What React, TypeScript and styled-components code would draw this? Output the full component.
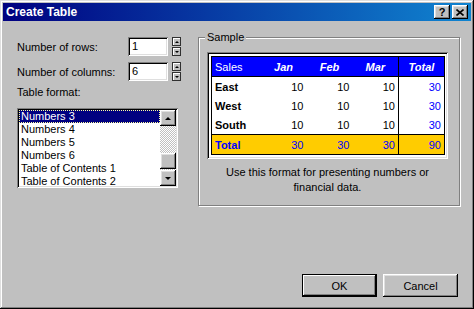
import styled, { createGlobalStyle } from "styled-components";

const GlobalStyle = createGlobalStyle`
  html, body {
    margin: 0;
    padding: 0;
    background: #c0c0c0;
  }
  body {
    font-family: "Liberation Sans", Arial, sans-serif;
    font-size: 11px;
    color: #000;
  }
`;

const raised = `
  box-shadow: inset -1px -1px #000, inset 1px 1px #fff, inset -2px -2px #808080, inset 2px 2px #dfdfdf;
`;

const sunken = `
  box-shadow: inset 1px 1px #808080, inset -1px -1px #fff, inset 2px 2px #000, inset -2px -2px #dfdfdf;
`;

const Window = styled.div`
  box-sizing: border-box;
  width: 474px;
  height: 309px;
  padding: 3px;
  background: #c0c0c0;
  box-shadow: inset -1px -1px #000, inset 1px 1px #dfdfdf, inset -2px -2px #808080,
    inset 2px 2px #fff;
  display: flex;
  flex-direction: column;
`;

const TitleBar = styled.div`
  height: 18px;
  display: flex;
  align-items: center;
  padding: 0 3px 0 3px;
  background: linear-gradient(to right, #000080, #1084d0);
  color: #fff;
  font-weight: bold;
  font-size: 12px;
`;

const TitleText = styled.span`
  flex: 1;
`;

const CaptionButton = styled.div<{ $gap?: number }>`
  width: 16px;
  height: 14px;
  margin-left: ${(p) => p.$gap ?? 0}px;
  background: #c0c0c0;
  ${raised}
  display: flex;
  align-items: center;
  justify-content: center;
  color: #000;
  font-size: 11px;
  font-weight: bold;
  line-height: 14px;
`;

const Body = styled.div`
  flex: 1;
  display: flex;
  flex-direction: column;
  padding: 16px 13px 9px 14px;
`;

const Main = styled.div`
  display: flex;
  align-items: flex-start;
  gap: 17px;
`;

const LeftColumn = styled.div`
  width: 164px;
  display: flex;
  flex-direction: column;
`;

const FieldRow = styled.div<{ $top?: number }>`
  display: flex;
  align-items: center;
  height: 19px;
  margin-top: ${(p) => p.$top ?? 0}px;
`;

const FieldLabel = styled.span`
  width: 111px;
`;

const NumberBox = styled.div`
  box-sizing: border-box;
  width: 40px;
  height: 19px;
  padding-left: 4px;
  line-height: 19px;
  background: #fff;
  ${sunken}
`;

const Spinner = styled.div`
  display: flex;
  flex-direction: column;
  margin-left: 4px;
  gap: 1px;
`;

const SpinButton = styled.div`
  width: 9px;
  height: 9px;
  background: #c0c0c0;
  box-shadow: inset 0 0 0 1px #303030, inset 2px 2px #fff;
  display: flex;
  align-items: center;
  justify-content: center;
`;

const Arrow = styled.span<{ $down?: boolean; $size?: number }>`
  width: 0;
  height: 0;
  border-left: ${(p) => p.$size ?? 3}px solid transparent;
  border-right: ${(p) => p.$size ?? 3}px solid transparent;
  ${(p) =>
    p.$down
      ? `border-top: ${p.$size ?? 3}px solid #000;`
      : `border-bottom: ${p.$size ?? 3}px solid #000;`}
`;

const SectionLabel = styled.div`
  margin-top: 5px;
  line-height: 13px;
`;

const ListBox = styled.div`
  box-sizing: border-box;
  margin-top: 9px;
  width: 161px;
  height: 80px;
  padding: 2px;
  background: #fff;
  ${sunken}
  display: flex;
`;

const Items = styled.div`
  flex: 1;
  overflow: hidden;
`;

const Item = styled.div<{ $selected?: boolean }>`
  height: 13px;
  line-height: 13px;
  padding-left: 2px;
  white-space: nowrap;
  background: ${(p) => (p.$selected ? "#000080" : "transparent")};
  color: ${(p) => (p.$selected ? "#fff" : "#000")};
  outline: ${(p) => (p.$selected ? "1px dotted #ffffa0" : "none")};
  outline-offset: -1px;
`;

const ScrollBar = styled.div`
  width: 16px;
  display: flex;
  flex-direction: column;
`;

const ScrollButton = styled.div`
  width: 16px;
  height: 16px;
  background: #c0c0c0;
  ${raised}
  display: flex;
  align-items: center;
  justify-content: center;
`;

const Track = styled.div`
  flex: 1;
  background: repeating-conic-gradient(#c0c0c0 0 25%, #fff 0 50%) 0 0 / 2px 2px;
`;

const Thumb = styled.div<{ $offset: number }>`
  width: 16px;
  height: 16px;
  margin-top: ${(p) => p.$offset}px;
  background: #c0c0c0;
  ${raised}
`;

const Group = styled.div`
  position: relative;
  box-sizing: border-box;
  width: 262px;
  padding: 14px 11px 10px 8px;
  border: 1px solid #808080;
  box-shadow: inset 1px 1px #fff, 1px 1px #fff;
`;

const GroupCaption = styled.span`
  position: absolute;
  top: -7px;
  left: 6px;
  padding: 0 2px;
  line-height: 13px;
  background: #c0c0c0;
`;

const Preview = styled.div`
  box-sizing: border-box;
  width: 241px;
  padding: 4px;
  background: #fff;
  ${sunken}
`;

const SampleTable = styled.table`
  width: 100%;
  border-collapse: collapse;
  border: 1px solid #000;
  table-layout: fixed;
`;

const Cell = styled.td<{
  $head?: boolean;
  $name?: boolean;
  $total?: boolean;
  $sep?: boolean;
  $label?: boolean;
  $light?: boolean;
}>`
  height: 19px;
  padding: 0 3px;
  text-align: ${(p) => (p.$head ? "center" : p.$label ? "left" : "right")};
  font-weight: ${(p) => (p.$head || p.$name ? "bold" : "normal")};
  font-style: ${(p) => (p.$head ? "italic" : "normal")};
  color: ${(p) => (p.$head || p.$light ? "#fff" : p.$total ? "#0000ff" : "#000")};
  border-left: ${(p) => (p.$sep ? "1px solid #000" : "none")};
  white-space: nowrap;
`;

const Row = styled.tr<{ $kind?: "head" | "body" | "total" }>`
  background: ${(p) =>
    p.$kind === "head" ? "#0000ff" : p.$kind === "total" ? "#ffcc00" : "#fff"};
  border-bottom: ${(p) => (p.$kind === "head" ? "1px solid #000" : "none")};
  border-top: ${(p) => (p.$kind === "total" ? "1px solid #000" : "none")};
`;

const Description = styled.div`
  width: 241px;
  margin-top: 6px;
  text-align: center;
  line-height: 15px;
`;

const ButtonRow = styled.div`
  margin-top: auto;
  display: flex;
  justify-content: flex-end;
  gap: 6px;
`;

const DialogButton = styled.div<{ $default?: boolean }>`
  box-sizing: border-box;
  width: 75px;
  height: 23px;
  display: flex;
  align-items: center;
  justify-content: center;
  background: #c0c0c0;
  box-shadow: ${(p) =>
    p.$default
      ? "inset 0 0 0 1px #000, inset -2px -2px #000, inset 2px 2px #fff, inset -3px -3px #808080"
      : "inset -1px -1px #000, inset 1px 1px #fff, inset -2px -2px #808080, inset 2px 2px #dfdfdf"};
`;

const formats = [
  "Numbers 3",
  "Numbers 4",
  "Numbers 5",
  "Numbers 6",
  "Table of Contents 1",
  "Table of Contents 2",
];

const regions = ["East", "West", "South"];

const colWidths = [49, 46, 46, 46, 46];

export default function App() {
  return (
    <>
      <GlobalStyle />
      <Window>
        <TitleBar>
          <TitleText>Create Table</TitleText>
          <CaptionButton>?</CaptionButton>
          <CaptionButton $gap={2}>
            <svg width="8" height="7" viewBox="0 0 8 7">
              <path d="M0.5 0.5 L7.5 6.5 M7.5 0.5 L0.5 6.5" stroke="#000" strokeWidth="1.6" />
            </svg>
          </CaptionButton>
        </TitleBar>
        <Body>
          <Main>
            <LeftColumn>
              <FieldRow>
                <FieldLabel>Number of rows:</FieldLabel>
                <NumberBox>1</NumberBox>
                <Spinner>
                  <SpinButton>
                    <Arrow $size={2} />
                  </SpinButton>
                  <SpinButton>
                    <Arrow $size={2} $down />
                  </SpinButton>
                </Spinner>
              </FieldRow>
              <FieldRow $top={6}>
                <FieldLabel>Number of columns:</FieldLabel>
                <NumberBox>6</NumberBox>
                <Spinner>
                  <SpinButton>
                    <Arrow $size={2} />
                  </SpinButton>
                  <SpinButton>
                    <Arrow $size={2} $down />
                  </SpinButton>
                </Spinner>
              </FieldRow>
              <SectionLabel>Table format:</SectionLabel>
              <ListBox>
                <Items>
                  {formats.map((f, i) => (
                    <Item key={f} $selected={i === 0}>
                      {f}
                    </Item>
                  ))}
                </Items>
                <ScrollBar>
                  <ScrollButton>
                    <Arrow />
                  </ScrollButton>
                  <Track>
                    <Thumb $offset={27} />
                  </Track>
                  <ScrollButton>
                    <Arrow $down />
                  </ScrollButton>
                </ScrollBar>
              </ListBox>
            </LeftColumn>
            <Group>
              <GroupCaption>Sample</GroupCaption>
              <Preview>
                <SampleTable>
                  <colgroup>
                    {colWidths.map((w, i) => (
                      <col key={i} width={w} />
                    ))}
                  </colgroup>
                  <tbody>
                    <Row $kind="head">
                      <Cell $label $light>
                        Sales
                      </Cell>
                      <Cell $head>Jan</Cell>
                      <Cell $head>Feb</Cell>
                      <Cell $head>Mar</Cell>
                      <Cell $head $sep>
                        Total
                      </Cell>
                    </Row>
                    {regions.map((r) => (
                      <Row key={r}>
                        <Cell $label $name>
                          {r}
                        </Cell>
                        <Cell>10</Cell>
                        <Cell>10</Cell>
                        <Cell>10</Cell>
                        <Cell $total $sep>
                          30
                        </Cell>
                      </Row>
                    ))}
                    <Row $kind="total">
                      <Cell $label $name $total>
                        Total
                      </Cell>
                      <Cell $total>30</Cell>
                      <Cell $total>30</Cell>
                      <Cell $total>30</Cell>
                      <Cell $total $sep>
                        90
                      </Cell>
                    </Row>
                  </tbody>
                </SampleTable>
              </Preview>
              <Description>
                Use this format for presenting numbers or
                <br />
                financial data.
              </Description>
            </Group>
          </Main>
          <ButtonRow>
            <DialogButton $default>OK</DialogButton>
            <DialogButton>Cancel</DialogButton>
          </ButtonRow>
        </Body>
      </Window>
    </>
  );
}
